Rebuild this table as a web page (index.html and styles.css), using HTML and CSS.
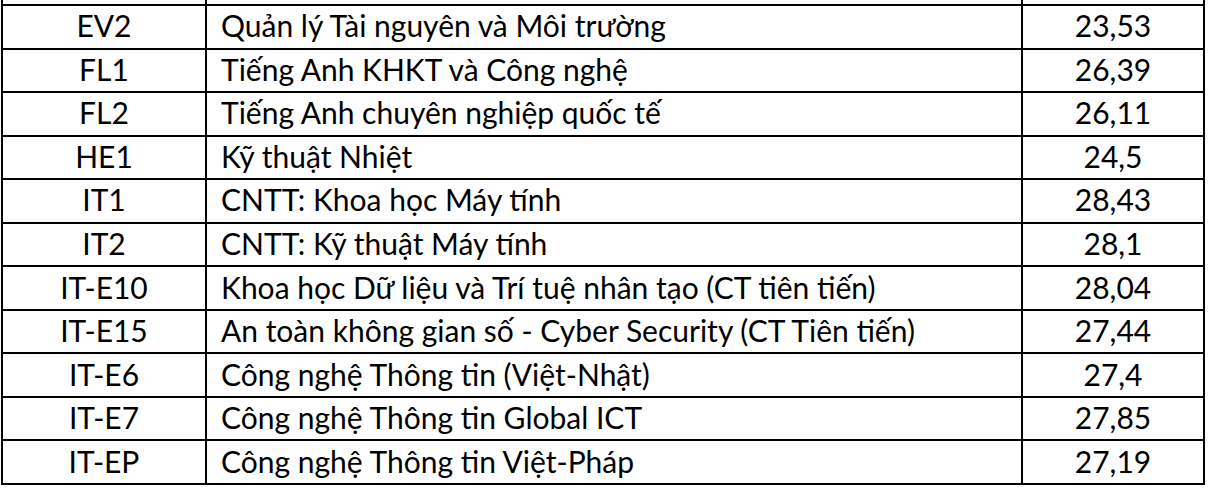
FILE: index.html
```html
<!DOCTYPE html>
<html lang="vi">
<head>
<meta charset="utf-8">
<link rel="stylesheet" href="styles.css">
</head>
<body>
<table class="scores">
  <colgroup>
    <col class="c-code">
    <col class="c-name">
    <col class="c-score">
  </colgroup>
  <tbody>
    <tr class="stub"><td></td><td></td><td></td></tr>
    <tr><td class="code">EV2</td><td class="name">Quản lý Tài nguyên và Môi trường</td><td class="score">23,53</td></tr>
    <tr><td class="code">FL1</td><td class="name">Tiếng Anh KHKT và Công nghệ</td><td class="score">26,39</td></tr>
    <tr><td class="code">FL2</td><td class="name">Tiếng Anh chuyên nghiệp quốc tế</td><td class="score">26,11</td></tr>
    <tr><td class="code">HE1</td><td class="name">Kỹ thuật Nhiệt</td><td class="score">24,5</td></tr>
    <tr><td class="code">IT1</td><td class="name">CNTT: Khoa học Máy tính</td><td class="score">28,43</td></tr>
    <tr><td class="code">IT2</td><td class="name">CNTT: Kỹ thuật Máy tính</td><td class="score">28,1</td></tr>
    <tr><td class="code">IT-E10</td><td class="name">Khoa học Dữ liệu và Trí tuệ nhân tạo (CT tiên tiến)</td><td class="score">28,04</td></tr>
    <tr><td class="code">IT-E15</td><td class="name">An toàn không gian số - Cyber Security (CT Tiên tiến)</td><td class="score">27,44</td></tr>
    <tr><td class="code">IT-E6</td><td class="name">Công nghệ Thông tin (Việt-Nhật)</td><td class="score">27,4</td></tr>
    <tr><td class="code">IT-E7</td><td class="name">Công nghệ Thông tin Global ICT</td><td class="score">27,85</td></tr>
    <tr><td class="code">IT-EP</td><td class="name">Công nghệ Thông tin Việt-Pháp</td><td class="score">27,19</td></tr>
  </tbody>
</table>
</body>
</html>
```

FILE: styles.css
```css
html, body {
  margin: 0;
  padding: 0;
  background: #fff;
}

.scores {
  margin-left: 1px;
  width: 1204px;
  table-layout: fixed;
  border-collapse: collapse;
  font-family: Lato, "Liberation Sans", sans-serif;
  font-size: 30px;
  color: #000;
}

.c-code { width: 204px; }
.c-name { width: 816px; }
.c-score { width: 182px; }

.scores td {
  border: 2px solid #000;
  height: 43.55px;
  padding: 0 0 3px 0;
  line-height: 34px;
  box-sizing: border-box;
  white-space: nowrap;
}

.scores .stub td {
  border-top: none;
  height: 5px;
  padding: 0;
  line-height: 0;
}

.code { text-align: center; }
.name { text-align: left; padding-left: 14px !important; }
.score { text-align: center; }
```
